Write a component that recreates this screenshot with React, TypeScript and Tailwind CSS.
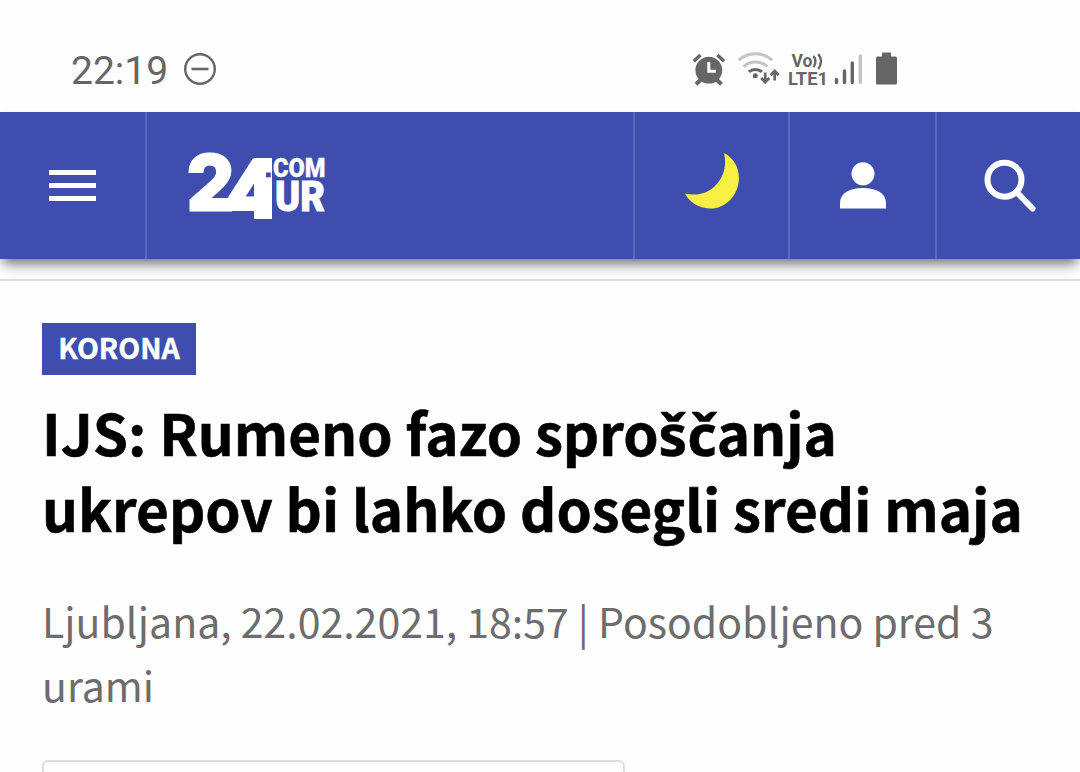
import type { ReactNode } from "react";

const sourceSans = "font-['Noto_Sans_CJK_SC','Noto_Sans',sans-serif]";

function StatusBar() {
  return (
    <div className="flex h-[112px] items-start text-[#666666]">
      <div className="ml-[71px] mt-[48px] w-[98px] whitespace-nowrap font-[Roboto,sans-serif] text-[39px] leading-[46px]">
        22:19
      </div>
      <svg className="ml-[14px] mt-[52px]" width="34" height="34" viewBox="0 0 34 34">
        <circle cx="17" cy="17" r="14.8" fill="none" stroke="currentColor" strokeWidth="2.4" />
        <path d="M8.5 17h17" stroke="currentColor" strokeWidth="2.6" />
      </svg>

      <svg className="ml-[463px] mt-[40px]" width="230" height="60" viewBox="0 0 230 60" fill="none">
        {/* alarm */}
        <g stroke="#666" strokeWidth="3.4">
          <path d="M13.8 21.3l6.600-6.300M37.400 15l6.600 6.300" />
          <path d="M21 39.5l-5 4.8M36.5 39.5l5 4.8" strokeWidth="4" />
        </g>
        <circle cx="28.8" cy="30.2" r="13.4" fill="#666" />
        <path d="M28.8 22v9.300h7" stroke="#fff" strokeWidth="3" />

        {/* wifi */}
        <path d="M58.5 20.200a25 25 0 0 1 33.700 0" stroke="#c4c4c4" strokeWidth="3" />
        <path d="M63.5 26.600a17.500 17.500 0 0 1 23.800 0" stroke="#c4c4c4" strokeWidth="3" />
        <path d="M68.800 31.800a10.200 10.200 0 0 1 13.200 0" stroke="#666" strokeWidth="3" />
        <circle cx="75.300" cy="35.800" r="2.500" fill="#666" />
        <g stroke="#666" strokeWidth="2.700">
          <path d="M85.200 32.500v9.500M81.200 38l4 4.200 4-4.200" />
          <path d="M94.700 40.500V31M90.700 35.200l4-4.200 4 4.200" />
        </g>

        {/* volte */}
        <g fill="#666" className="font-[Roboto,sans-serif] font-bold">
          <text x="111.500" y="27.200" fontSize="18" textLength="21" lengthAdjust="spacingAndGlyphs">
            Vo
          </text>
          <text x="108" y="45.300" fontSize="19" textLength="40" lengthAdjust="spacingAndGlyphs">
            LTE1
          </text>
        </g>
        <path d="M133.500 16q4 5 0 11.200M138.300 14q5.500 7 0 15" stroke="#666" strokeWidth="2.400" />

        {/* signal */}
        <g strokeWidth="3.400" strokeLinecap="round">
          <path d="M156.500 39.500v3M164.500 31v11.500M172.300 23v19.500" stroke="#666" />
          <path d="M180.300 16v26.500" stroke="#c4c4c4" />
        </g>

        {/* battery */}
        <path
          d="M202 12.500h9v4h4.500q1.500 0 1.500 1.500v25q0 1.500-1.500 1.500h-18q-1.500 0-1.500-1.500V18q0-1.500 1.500-1.500h4.500z"
          fill="#666"
        />
      </svg>
    </div>
  );
}

function Logo() {
  return (
    <svg
      className="overflow-visible"
      width="137"
      height="68"
      viewBox="0 0 137 68"
      fill="#fff"
      role="img"
      aria-label="24ur.com"
    >
      <clipPath id="digits">
        <rect x="-2" y="-2" width="85" height="69" />
      </clipPath>
      <g clipPath="url(#digits)">
        <text className="font-[Inter,sans-serif] font-black" stroke="#fff" strokeWidth="1">
          <tspan x="-2.500" y="58.500" fontSize="79" textLength="48" lengthAdjust="spacingAndGlyphs">
            2
          </tspan>
          <tspan x="36.500" y="66.500" fontSize="83">
            4
          </tspan>
        </text>
        <rect x="65" y="6" width="18" height="61" />
        <rect x="38" y="50" width="28" height="9" />
      </g>
      <rect x="77" y="20.500" width="4.800" height="4.800" fill="#3f4eae" />
      <g className="font-[Roboto,sans-serif] font-black" stroke="#fff">
        <text x="84" y="25.200" fontSize="26" strokeWidth="0.3" textLength="52.500" lengthAdjust="spacingAndGlyphs">
          COM
        </text>
        <text x="86" y="58.600" fontSize="42.500" strokeWidth="0.900" textLength="50" lengthAdjust="spacingAndGlyphs">
          UR
        </text>
      </g>
    </svg>
  );
}

function NavCell({ className, children }: { className: string; children: ReactNode }) {
  return (
    <button type="button" className={`flex h-full items-start border-l-2 border-[#5b69ba] ${className}`}>
      {children}
    </button>
  );
}

function NavBar() {
  return (
    <header className="relative flex h-[147px] bg-[#3f4eae] shadow-[0_8px_12px_-3px_rgba(0,0,0,0.55)]">
      <button type="button" className="flex w-[145px] flex-col gap-2 pl-[49px] pt-[58px]" aria-label="Meni">
        <span className="h-[5px] w-[47px] bg-white" />
        <span className="h-[5px] w-[47px] bg-white" />
        <span className="h-[5px] w-[47px] bg-white" />
      </button>
      <div className="w-[488px] border-l-2 border-[#5b69ba] pl-[42px] pt-[40px]">
        <Logo />
      </div>
      <NavCell className="w-[155px] pl-[49px] pt-[40px]">
        <svg width="56" height="58" viewBox="0 0 56 58" fill="#f7f043">
          <path d="M40 1C51 7 56.500 18 54.500 31 52 46 40 57 26 56.500 14 56 5 50 1 41.500 12 44 23 42 31 34 40 25 43 13 40 1z" />
        </svg>
      </NavCell>
      <NavCell className="w-[147px] pl-[50px] pt-[49px]">
        <svg width="46" height="48" viewBox="0 0 46 48" fill="#fff">
          <circle cx="23" cy="12.800" r="11.500" />
          <path d="M0 47.500V42C0 32 10 27 23 27s23 5 23 15v5.500z" />
        </svg>
      </NavCell>
      <NavCell className="w-[145px] pl-[47px] pt-[46px]">
        <svg width="54" height="56" viewBox="0 0 54 56" fill="none" stroke="#fff">
          <circle cx="20.500" cy="21.700" r="17" strokeWidth="6" />
          <path d="M33 34.500l15.500 16" strokeWidth="6" strokeLinecap="round" />
        </svg>
      </NavCell>
    </header>
  );
}

export default function App() {
  return (
    <div className="h-[772px] w-[1080px] overflow-hidden bg-[#fefefe]">
      <StatusBar />
      <NavBar />
      <main className={`mt-5 border-t-2 border-[#dddddd] px-[42px] pt-[42px] ${sourceSans}`}>
        <div className="flex h-[52px] w-[154px] items-center justify-center bg-[#3f4eae] pb-1 text-[28.5px] font-bold leading-none text-white [-webkit-text-stroke:0.4px_white]">
          KORONA
        </div>
        <h1 className="mt-[18px] whitespace-nowrap text-[56.5px] font-bold leading-[76px] text-black [-webkit-text-stroke:0.6px_black]">
          IJS: Rumeno fazo spro
          <span className="font-['Noto_Sans',sans-serif] text-[57px] leading-none">šč</span>
          anja
          <br />
          ukrepov bi lahko dosegli sredi maja
        </h1>
        <p className="mt-[43px] whitespace-nowrap text-[41px] leading-[64px] text-[#6d6d6d]">
          Ljubljana, 22.02.2021, 18:57 | Posodobljeno pred 3
          <br />
          urami
        </p>
        <div className="mt-[44px] h-[60px] w-[583px] rounded-md border-2 border-[#dddddd]" />
      </main>
    </div>
  );
}
